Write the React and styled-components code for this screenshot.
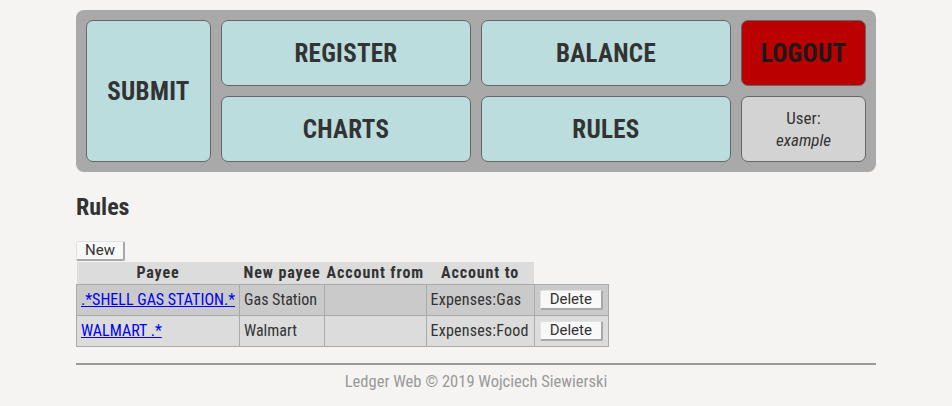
import React from 'react'
import styled, { createGlobalStyle } from 'styled-components'

const Global = createGlobalStyle`
  body {
    margin: 0;
    background: #f5f4f2;
    font-family: Roboto, "Liberation Sans", sans-serif;
    font-stretch: 75%;
    color: #333;
  }
`

const Page = styled.div`
  width: 800px;
  margin: 10px auto 0;
`

const Menu = styled.nav`
  display: grid;
  grid-template-columns: 125px 250px 250px 125px;
  grid-template-rows: 66px 66px;
  gap: 10px;
  padding: 10px;
  background: #a9a9a9;
  border-radius: 8px;
`

const MenuButton = styled.button`
  box-sizing: border-box;
  border: 1px solid #666;
  border-radius: 7px;
  background: ${p => p.$bg || '#bbdddd'};
  color: ${p => p.$fg || '#333'};
  font-family: Roboto, sans-serif;
  font-stretch: 75%;
  font-weight: bold;
  font-size: 25px;
  letter-spacing: 0.3px;
  grid-row: ${p => p.$tall ? 'span 2' : 'auto'};
  padding: 0;
  cursor: pointer;
`

const UserBox = styled.div`
  box-sizing: border-box;
  border: 1px solid #666;
  border-radius: 7px;
  background: #d3d3d3;
  display: flex;
  flex-direction: column;
  align-items: center;
  justify-content: center;
  font-size: 17px;
  line-height: 22px;
  color: #333;
  em { font-style: italic; }
`

const Title = styled.h2`
  font-size: 24px;
  font-weight: bold;
  margin: 21px 0 19px;
  color: #333;
`

const SmallButton = styled.button`
  box-sizing: border-box;
  font-family: Roboto, sans-serif;
  font-stretch: 100%;
  font-size: 15px;
  color: #333;
  background: #f8f8f8;
  border: 1px solid #e2e2e2;
  border-right: 2px solid #a8a8a8;
  border-bottom: 2px solid #a8a8a8;
  border-radius: 2px;
  padding: 0 ${p => p.$pad || 9}px;
  height: 20px;
  line-height: 16px;
`

const Table = styled.table`
  border-collapse: collapse;
  margin-top: 1px;
  font-size: 16px;
  th {
    background: #dcdcdc;
    font-weight: bold;
    font-size: 16px;
    letter-spacing: 0.9px;
    padding: 0 2px;
    height: 22px;
    white-space: nowrap;
  }
  th.wide { padding: 0 4px; }
  th.empty { background: transparent; }
  td {
    border: 1px solid #aaa;
    padding: 0 4px;
    height: 30px;
    white-space: nowrap;
  }
  td.to { letter-spacing: 0.2px; padding-right: 5px; }
  td.action { padding: 0 5px; }
  tbody tr:nth-child(odd) td { background: #cacaca; }
  tbody tr:nth-child(even) td { background: #dcdcdc; }
  a { color: #0000ee; }
`

const Footer = styled.footer`
  border-top: 2px solid #999;
  margin-top: 16px;
  padding-top: 7px;
  text-align: center;
  color: #999;
  font-size: 16.5px;
`

const rules = [
  { payee: '.*SHELL GAS STATION.*', newPayee: 'Gas Station', from: '', to: 'Expenses:Gas' },
  { payee: 'WALMART .*', newPayee: 'Walmart', from: '', to: 'Expenses:Food' },
]

export default function App() {
  return (
    <Page>
      <Global />
      <Menu>
        <MenuButton $tall>SUBMIT</MenuButton>
        <MenuButton>REGISTER</MenuButton>
        <MenuButton>BALANCE</MenuButton>
        <MenuButton $bg="#bb0000" $fg="#1a1a1a">LOGOUT</MenuButton>
        <MenuButton>CHARTS</MenuButton>
        <MenuButton>RULES</MenuButton>
        <UserBox>
          <span>User:</span>
          <em>example</em>
        </UserBox>
      </Menu>
      <Title>Rules</Title>
      <SmallButton $pad={8}>New</SmallButton>
      <Table>
        <thead>
          <tr>
            <th>Payee</th>
            <th className="wide">New payee</th>
            <th>Account from</th>
            <th>Account to</th>
            <th className="empty"></th>
          </tr>
        </thead>
        <tbody>
          {rules.map(r => (
            <tr key={r.payee}>
              <td><a href="#">{r.payee}</a></td>
              <td>{r.newPayee}</td>
              <td>{r.from}</td>
              <td className="to">{r.to}</td>
              <td className="action"><SmallButton>Delete</SmallButton></td>
            </tr>
          ))}
        </tbody>
      </Table>
      <Footer>Ledger Web © 2019 Wojciech Siewierski</Footer>
    </Page>
  )
}
